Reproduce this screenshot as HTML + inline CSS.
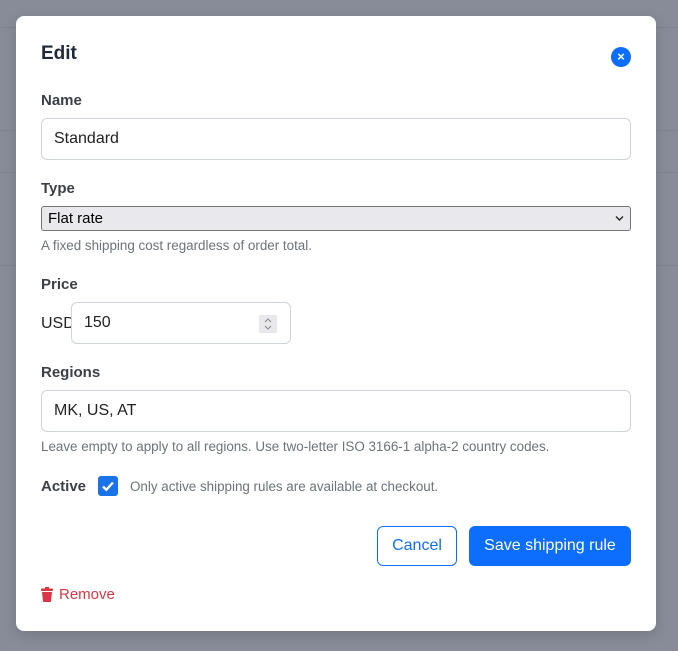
<!DOCTYPE html>
<html><head><style>
*{box-sizing:border-box;margin:0;padding:0}
body{width:678px;height:651px;background:#878c98;font-family:"Liberation Sans",sans-serif;position:relative;overflow:hidden}
.line{position:absolute;left:0;width:678px;height:1px;background:#7f8490}
.modal{position:absolute;left:16px;top:16px;width:640px;height:615px;background:#fff;border-radius:8px;box-shadow:0 4px 14px rgba(0,0,0,.15)}
.a{position:absolute}
.lbl{font-weight:bold;font-size:15px;color:#3a3f48}
.inp{border:1px solid #ced4da;border-radius:6px;background:#fff;font-size:16px;color:#222;padding-left:12px;display:flex;align-items:center}
.help{font-size:13.4px;color:#6c737c}
.btn{display:flex;align-items:center;justify-content:center;border-radius:6px;font-size:16px}
</style></head><body>
<div class="line" style="top:27px"></div>
<div class="line" style="top:130px"></div>
<div class="line" style="top:172px"></div>
<div class="line" style="top:265px"></div>
<div class="modal">
<div class="a" style="left:25px;top:27px;font-size:19px;font-weight:bold;color:#1f2937">Edit</div>
<div class="a" style="left:595px;top:31px;width:20px;height:20px;border-radius:50%;background:#0d6efd;color:#fff;font-size:13px;font-weight:bold;text-align:center;line-height:19px">×</div>
<div class="a lbl" style="left:25px;top:76px">Name</div>
<div class="a inp" style="left:25px;top:102px;width:590px;height:42px">Standard</div>
<div class="a lbl" style="left:25px;top:164px">Type</div>
<div class="a" style="left:25px;top:190px;width:590px;height:25px;background:#e9e9ed;border:1px solid #767676;border-radius:3px;font-size:15px;color:#000;padding-left:6px;line-height:23px">Flat rate<svg style="position:absolute;right:6px;top:8px" width="9" height="7" viewBox="0 0 9 7"><path d="M1 1.5l3.5 3.5 3.5-3.5" stroke="#222" stroke-width="1.4" fill="none"/></svg></div>
<div class="a help" style="left:25px;top:222px">A fixed shipping cost regardless of order total.</div>
<div class="a lbl" style="left:25px;top:260px">Price</div>
<div class="a" style="left:25px;top:299px;font-size:16px;color:#222">USD</div>
<div class="a inp" style="left:55px;top:286px;width:220px;height:42px">150<svg style="position:absolute;right:13px;top:12px" width="18" height="18" viewBox="0 0 18 18"><rect width="18" height="18" fill="#e9e9ed"/><path d="M6 7l3-3 3 3M6 11l3 3 3-3" stroke="#888" stroke-width="1" fill="none"/></svg></div>
<div class="a lbl" style="left:25px;top:348px">Regions</div>
<div class="a inp" style="left:25px;top:374px;width:590px;height:42px">MK, US, AT</div>
<div class="a help" style="left:25px;top:423px">Leave empty to apply to all regions. Use two-letter ISO 3166-1 alpha-2 country codes.</div>
<div class="a lbl" style="left:25px;top:462px">Active</div>
<div class="a" style="left:82px;top:460px;width:20px;height:20px;background:#1a73e8;border-radius:3px"><svg width="20" height="20" viewBox="0 0 20 20"><path d="M5 10.5l3.3 3.3L15 6.5" stroke="#fff" stroke-width="2.4" fill="none"/></svg></div>
<div class="a help" style="left:114px;top:463px">Only active shipping rules are available at checkout.</div>
<div class="a btn" style="left:361px;top:510px;width:80px;height:40px;border:1px solid #0d6efd;color:#0d6efd">Cancel</div>
<div class="a btn" style="left:453px;top:510px;width:162px;height:40px;background:#0d6efd;color:#fff">Save shipping rule</div>
<div class="a" style="left:25px;top:570px;color:#dc3545;font-size:15px;display:flex;align-items:center;gap:6px"><svg width="12" height="15" viewBox="0 0 12 15"><rect x="0" y="1.5" width="12" height="2.5" rx="1" fill="#dc3545"/><rect x="4" y="0" width="4" height="2" fill="#dc3545"/><path d="M1 5h10l-1 9.2c0 .5-.5.8-1 .8H3c-.5 0-1-.3-1-.8z" fill="#dc3545"/></svg>Remove</div>
</div>
</body></html>
